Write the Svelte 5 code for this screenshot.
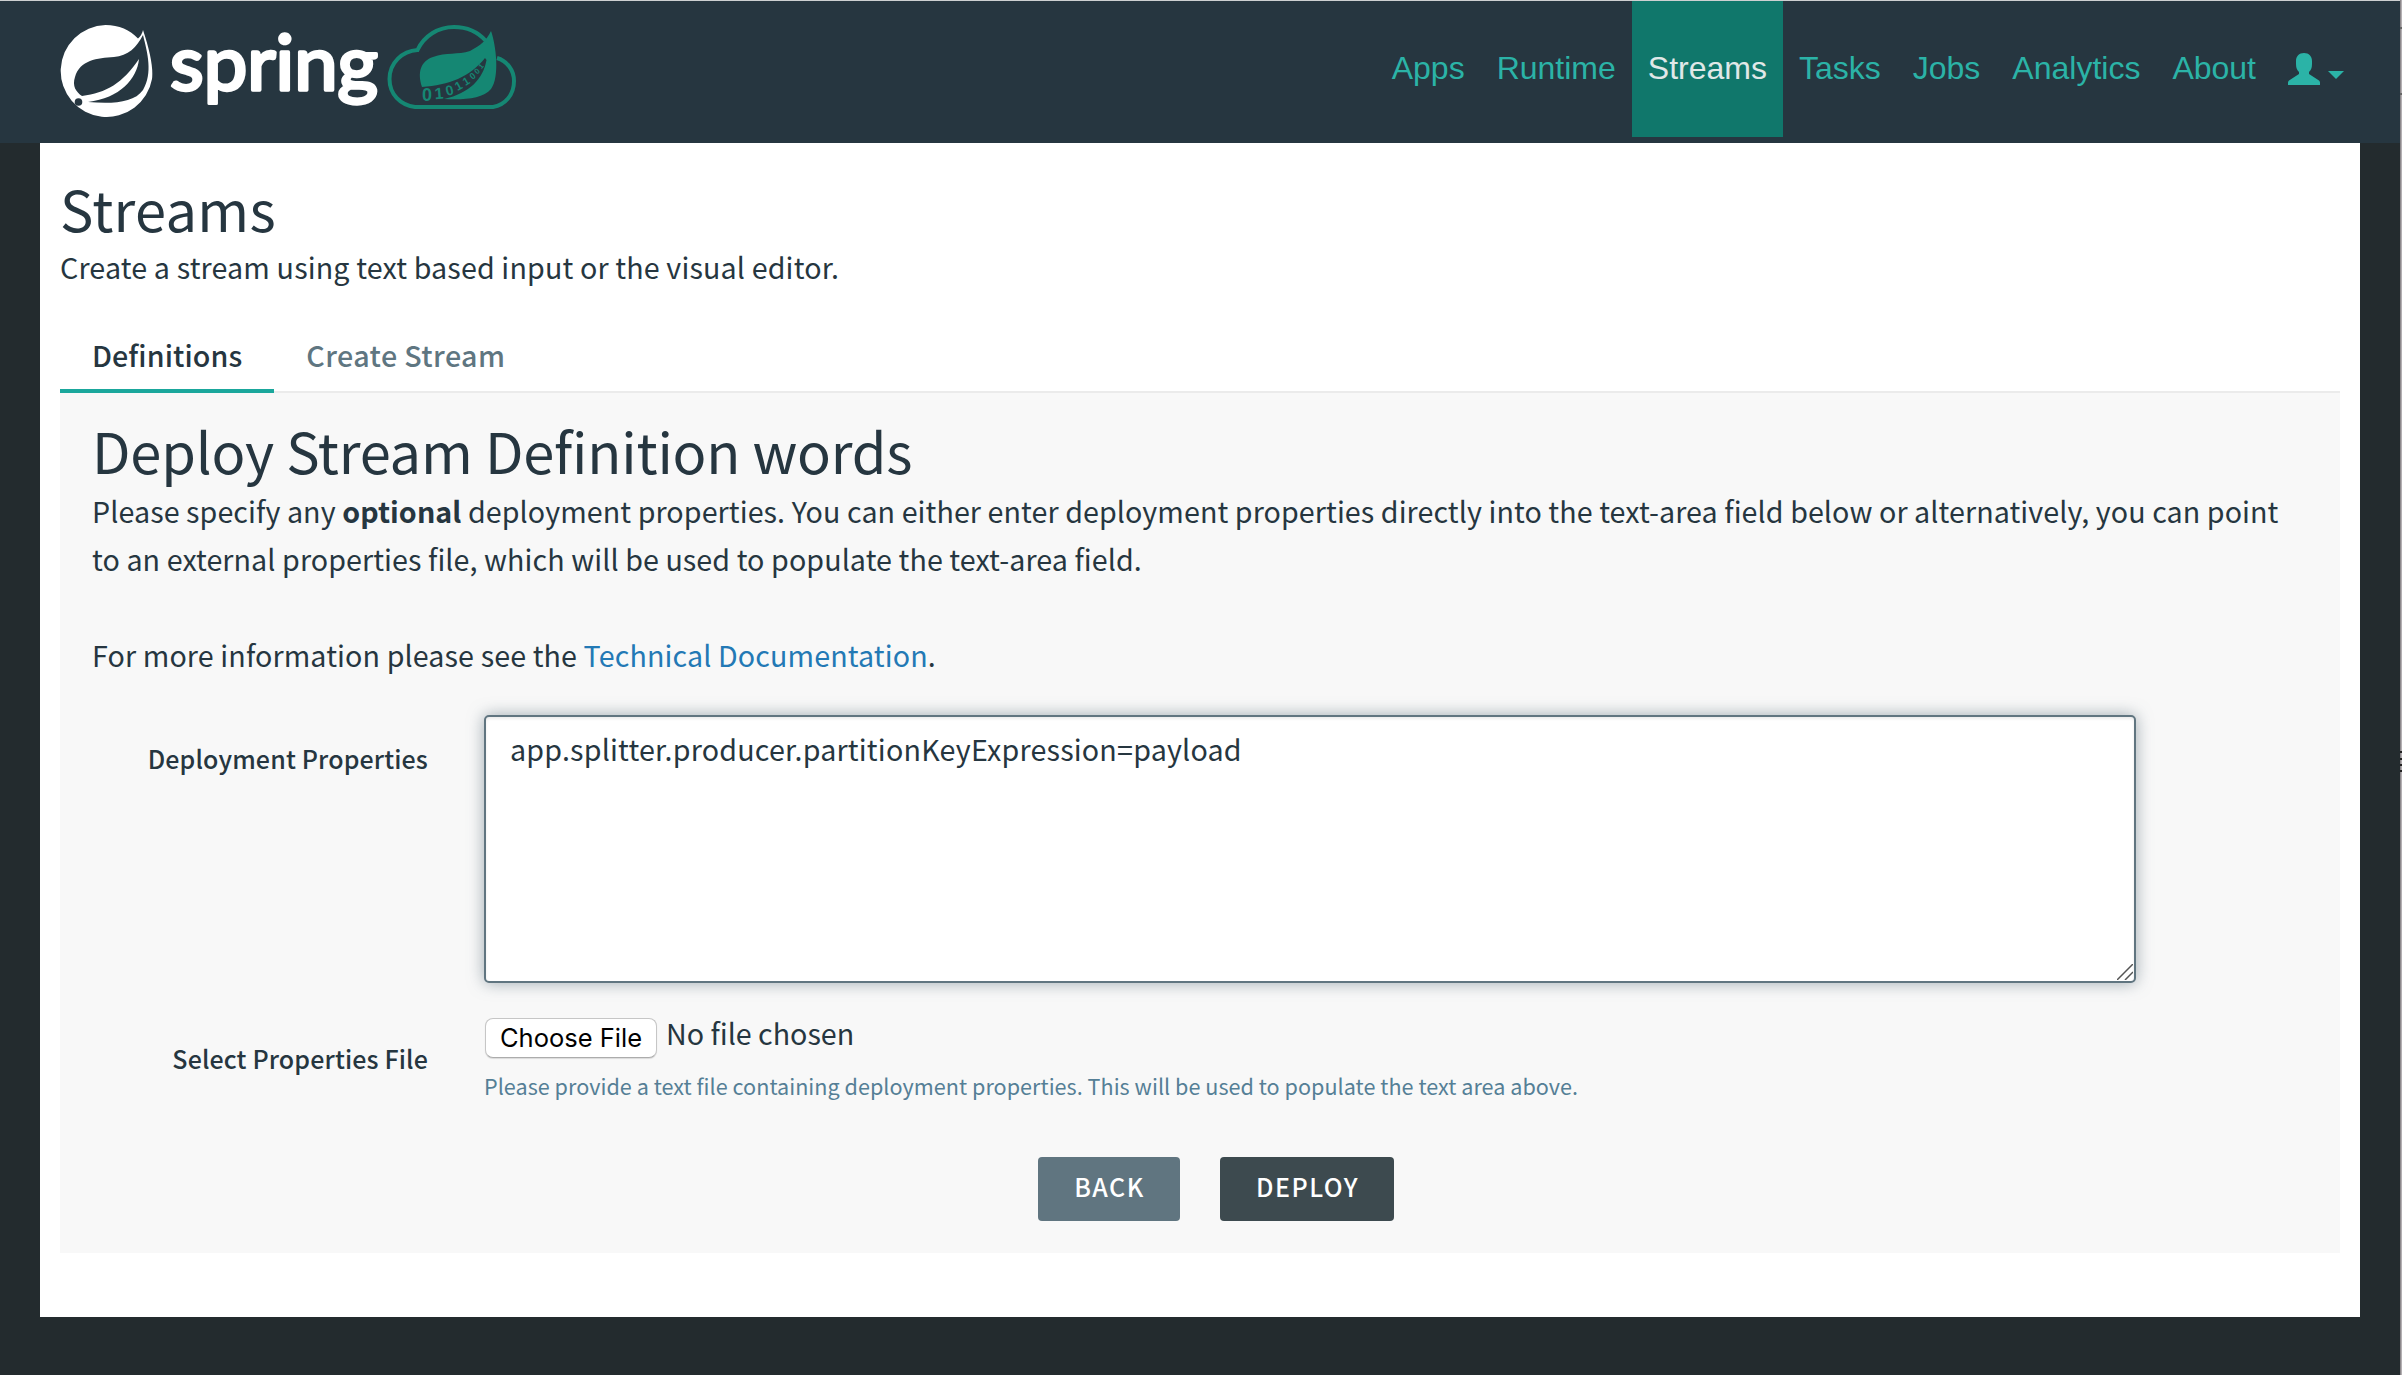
<script>
  const nav = ['Apps', 'Runtime', 'Streams', 'Tasks', 'Jobs', 'Analytics', 'About'];
  let properties = $state('app.splitter.producer.partitionKeyExpression=payload');

  // Binary digits that run along the vein of the leaf
  const digits = [
    { c: '0', x: 40, y: 70, s: 18, r: 0 },
    { c: '1', x: 52, y: 68, s: 16, r: -5 },
    { c: '0', x: 62.5, y: 65, s: 14, r: -15 },
    { c: '1', x: 71.5, y: 60.5, s: 12, r: -28 },
    { c: '1', x: 79, y: 56, s: 11, r: -32 },
    { c: '0', x: 85.5, y: 51, s: 9, r: -38 },
    { c: '0', x: 90, y: 46, s: 8, r: -42 },
    { c: '1', x: 94, y: 41, s: 7, r: -48 }
  ];
</script>

<div class="page">
  <header>
    <div class="brand">
      <svg width="93" height="93" viewBox="0 0 93 93">
        <path fill="#fff" d="M45.500 0C59 0 70 5 78 13.5Q82 10 83 5Q94 38 92 54A46 46 0 1 1 45.500 0Z" />
        <path fill="#263640" d="M83 10C77 22 68 31 54 32C37 33 20 35 15 52C12 61 16 67 22 71C46 68 63 58 79 34C77 54 60 73 28 77C52 79 74 78 83 65C93 48 87.500 28 83 10Z" />
        <circle cx="18.500" cy="77" r="3.800" fill="#263640" />
      </svg>
      <svg class="word" width="212" height="93" viewBox="0 0 212 93">
        <text x="2" y="64.500" textLength="208" lengthAdjust="spacingAndGlyphs">spring</text>
      </svg>
      <svg class="cloud" width="129" height="84" viewBox="0 0 129 84">
        <path fill="none" stroke="#158773" stroke-width="4" d="M99 16C91 7 80 2 67 2C51 2 37 11 30.500 25C15 26 2.500 38 2.500 54C2.500 69 13 80 28 82H106C118 80 127 70 127 56C127 45 120 36 110 33" />
        <path fill="#158773" d="M104 6C99 16 94 20 83 26C71 30 59 27 46 32C34 36 30 47 35 62C62 60 83 52 98 33L99.500 35C96 54 83 68 57 74C76 75 96 74 104 64C113 52 109 20 104 6Z" />
        {#each digits as d}
          <text class="digit" font-size={d.s} transform="translate({d.x} {d.y}) rotate({d.r})" dy=".36em">{d.c}</text>
        {/each}
      </svg>
    </div>
    <nav>
      {#each nav as item}<a class:active={item === 'Streams'}>{item}</a>{/each}
      <span class="user">
        <svg width="56" height="32" viewBox="0 0 56 32" fill="#2bb3a7">
          <path d="M16 0C11 0 8 3.500 8 8V11C8 15 9 17 11 19V21L1 27.500Q0 28.500 0 29.500V32H32V29.500Q32 28.500 31 27.500L21 21V19C23 17 24 15 24 11V8C24 3.500 21 0 16 0Z" />
          <path d="M40 18H56L48 26Z" />
        </svg>
      </span>
    </nav>
  </header>
  <main>
    <h1>Streams</h1>
    <p class="lead">Create a stream using text based input or the visual editor.</p>
    <div class="tabs"><span class="tab on">Definitions</span><span class="tab">Create Stream</span></div>
    <section>
      <h1 class="title">Deploy Stream Definition words</h1>
      <p>Please specify any <b>optional</b> deployment properties. You can either enter deployment properties directly into the text-area field below or alternatively, you can point to an external properties file, which will be used to populate the text-area field.</p>
      <p class="more">For more information please see the <a class="link">Technical Documentation</a>.</p>
      <div class="form">
        <label for="props">Deployment Properties</label>
        <div class="area">
          <textarea id="props" spellcheck="false" bind:value={properties}></textarea>
          <svg class="grip" width="16" height="16" viewBox="0 0 16 16" stroke="#555" stroke-width="1.500">
            <path d="M0 16L16 0M8 16L16 8" />
          </svg>
        </div>
        <span class="label file-label">Select Properties File</span>
        <div>
          <div class="file"><button class="choose">Choose File</button><span>No file chosen</span></div>
          <div class="help">Please provide a text file containing deployment properties. This will be used to populate the text area above.</div>
        </div>
      </div>
      <div class="actions">
        <button class="btn back">BACK</button>
        <button class="btn deploy">DEPLOY</button>
      </div>
    </section>
  </main>
  <div class="edge"></div>
</div>

<style>
  :global(body) { background: #232b2e; }
  .page {
    position: relative;
    height: 1375px;
    font: 28.65px/48px "Noto Sans CJK SC", sans-serif;
    letter-spacing: 0.085px;
    color: #263640;
  }
  header {
    box-sizing: border-box;
    height: 143px;
    background: #263640;
    border-top: 1px solid #cdd0d1;
    display: flex;
    justify-content: space-between;
    padding: 0 42px 0 60px;
  }
  .brand { display: flex; align-items: flex-start; padding-top: 24px; }
  .word { margin-left: 15px; overflow: visible; }
  .word text {
    font: 400 75px Lato, sans-serif;
    letter-spacing: 0;
    fill: #fff;
    stroke: #fff;
    stroke-width: 3.4px;
    stroke-linejoin: round;
  }
  .cloud { margin-left: 7px; }
  .digit {
    font-family: "Liberation Sans", sans-serif;
    font-weight: 700;
    letter-spacing: 0;
    text-anchor: middle;
    fill: #158773;
  }
  nav {
    display: flex;
    height: 136px;
    font: 32px/36px "Liberation Sans", sans-serif;
    letter-spacing: 0;
    color: #2bb3a7;
  }
  nav a { padding: 49px 16px 0; }
  .active { background: #10776b; color: #e0e8e8; }
  .user { padding: 52px 16px 0; line-height: 0; }
  main { margin: 0 42px 0 40px; padding: 31px 20px 64px; background: #fff; }
  h1 { font-size: 56px; font-weight: 400; margin: 0; line-height: 68px; letter-spacing: 0.3px; }
  .title { letter-spacing: -0.2px; margin-bottom: 3px; }
  p { margin: 0; }
  .lead { margin-top: 1px; letter-spacing: 0.15px; }
  .tabs { display: flex; height: 75px; box-sizing: border-box; margin-top: 27px; box-shadow: inset 0 -2px #ebebeb; }
  .tab { padding: 13px 32px 0; font-weight: 500; color: #5f7681; letter-spacing: 0.4px; }
  .on { color: #263640; border-bottom: 4px solid #1aa79c; letter-spacing: 0.1px; }
  section { padding: 23px 32px 32px; background: #f8f8f8; }
  .more { margin-top: 48px; letter-spacing: 0.12px; }
  .link { color: #2379b5; }
  .form { display: grid; grid-template-columns: 336px 1652px; column-gap: 56px; row-gap: 25px; margin-top: 36px; }
  label, .label { font-size: 25px; line-height: 36px; font-weight: 500; letter-spacing: 0.14px; text-align: right; padding-top: 25px; }
  .file-label { padding-top: 32px; }
  .area { position: relative; height: 268px; }
  textarea {
    display: block;
    box-sizing: border-box;
    width: 100%;
    height: 100%;
    margin: 0;
    padding: 8px 24px;
    border: 2px solid #607580;
    border-radius: 5px;
    box-shadow: 0 0 16px rgba(96, 117, 128, 0.6), inset 0 2px 3px rgba(0, 0, 0, 0.08);
    font: inherit;
    letter-spacing: 0.2px;
    color: inherit;
    background: #fff;
    resize: none;
    outline: none;
  }
  .grip { position: absolute; right: 3px; bottom: 3px; }
  .file { display: flex; height: 50px; letter-spacing: 0; }
  .file span { padding-top: 1px; }
  .choose {
    box-sizing: border-box;
    width: 172px;
    height: 40px;
    margin: 10px 9px 0 1px;
    padding: 0;
    border: 1px solid #c6c6c6;
    border-bottom-color: #acacac;
    border-radius: 8px;
    background: #fff;
    box-shadow: 0 1px 1px rgba(0, 0, 0, 0.12);
    font: 25.5px/38px Inter, sans-serif;
    color: #000;
  }
  .help { margin-top: 10px; font-size: 21.6px; line-height: 36px; letter-spacing: 0.02px; color: #557f96; }
  .actions { display: flex; justify-content: center; gap: 40px; margin-top: 53px; padding-left: 32px; }
  .btn {
    box-sizing: border-box;
    height: 64px;
    border: 0;
    border-radius: 4px;
    padding: 0 0 5px 1px;
    font: 500 25px/59px "Noto Sans CJK SC", sans-serif;
    letter-spacing: 1.5px;
    color: #fff;
  }
  .back { width: 142px; background: #607580; }
  .deploy { width: 174px; background: #3d4a4f; }
  .edge {
    position: absolute;
    top: 0;
    right: 0;
    width: 2px;
    height: 1375px;
    background:
      linear-gradient(#222, #222) 0 751px / 2px 2px no-repeat,
      linear-gradient(#222, #222) 0 758px / 2px 2px no-repeat,
      linear-gradient(#222, #222) 0 764px / 2px 2px no-repeat,
      linear-gradient(#222, #222) 0 770px / 2px 2px no-repeat,
      linear-gradient(#666, #666) 0 27px / 2px 2px no-repeat,
      linear-gradient(#666, #666) 0 93px / 2px 2px no-repeat,
      linear-gradient(90deg, #8d898c 50%, #b3afb2 50%);
  }
</style>
